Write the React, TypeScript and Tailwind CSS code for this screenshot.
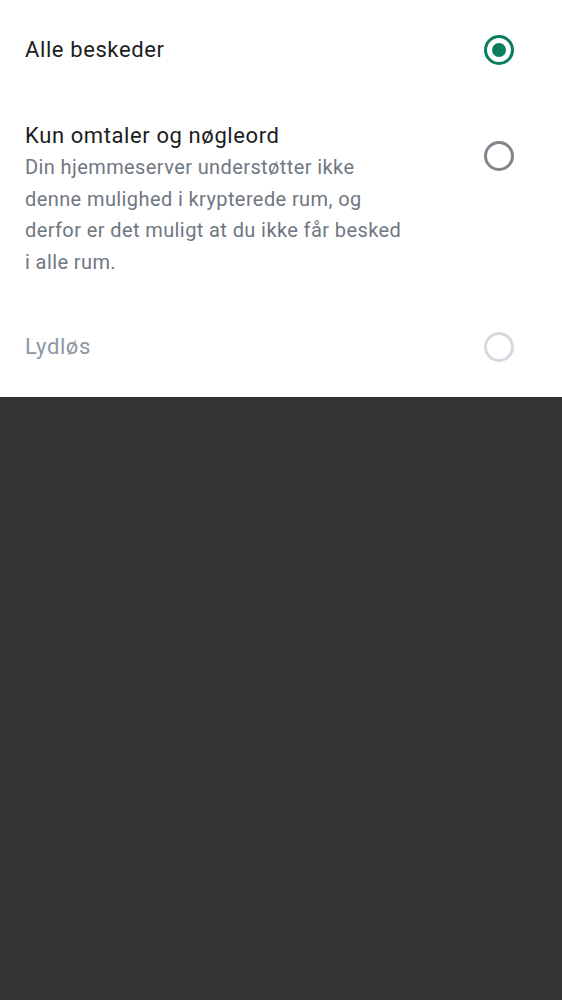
import React from "react";

function Radio({ state }: { state: "on" | "off" | "disabled" }) {
  if (state === "on") {
    return (
      <div className="w-[30px] h-[30px] rounded-full border-[3px] border-[#0a7d5f] flex items-center justify-center shrink-0">
        <div className="w-[14px] h-[14px] rounded-full bg-[#0a7d5f]" />
      </div>
    );
  }
  return (
    <div
      className={
        state === "off"
          ? "w-[30px] h-[30px] rounded-full border-[3px] border-[#80868e] shrink-0"
          : "w-[30px] h-[30px] rounded-full border-[3px] border-[#d5dae0] shrink-0"
      }
    />
  );
}

export default function App() {
  return (
    <div className="min-h-[1000px] bg-[#333333] font-['Roboto',sans-serif]">
      <div className="bg-white pt-[35px] pb-[35px] pl-[25px] pr-[48px] flex flex-col">
        <div className="flex items-center justify-between h-[30px]">
          <span className="text-[22px] leading-[30px] tracking-[0.6px] text-[#1b1d22]">Alle beskeder</span>
          <Radio state="on" />
        </div>
        <div className="mt-[56px] flex items-start justify-between">
          <div className="flex flex-col">
            <span className="text-[22px] leading-[30px] tracking-[0.6px] text-[#1b1d22]">Kun omtaler og nøgleord</span>
            <p className="mt-[1px] text-[20px] leading-[31.5px] tracking-[0.4px] text-[#6f7782]">
              Din hjemmeserver understøtter ikke
              <br />
              denne mulighed i krypterede rum, og
              <br />
              derfor er det muligt at du ikke får besked
              <br />
              i alle rum.
            </p>
          </div>
          <div className="mt-[20px]">
            <Radio state="off" />
          </div>
        </div>
        <div className="mt-[54px] flex items-center justify-between h-[30px]">
          <span className="text-[22px] leading-[30px] tracking-[0.6px] text-[#8d97a5]">Lydløs</span>
          <Radio state="disabled" />
        </div>
      </div>
    </div>
  );
}
